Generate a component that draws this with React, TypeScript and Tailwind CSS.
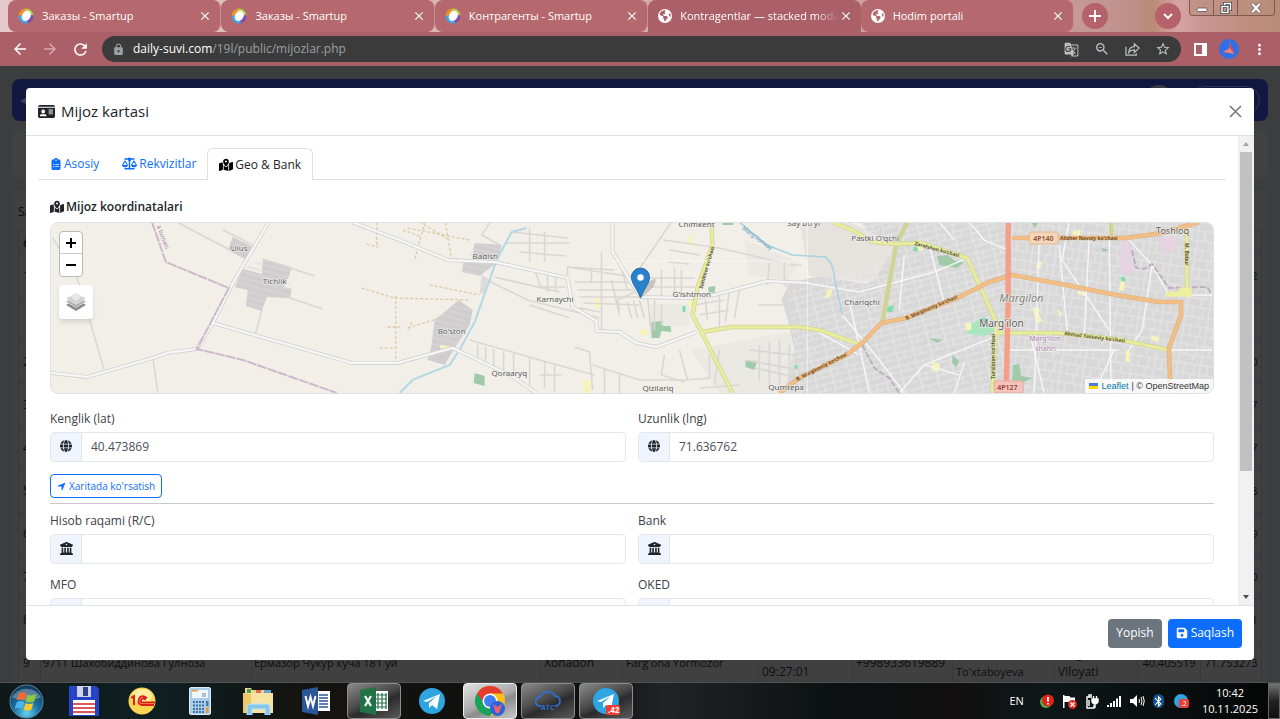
import { useState, type ReactNode } from "react";
import {
  FaBuildingColumns,
  FaClipboardList,
  FaEarthAmericas,
  FaFloppyDisk,
  FaGlobe,
  FaIdCard,
  FaLocationArrow,
  FaMapLocationDot,
  FaScaleBalanced,
} from "react-icons/fa6";
import {
  MdArrowBack,
  MdArrowForward,
  MdBluetooth,
  MdClose,
  MdGTranslate,
  MdLock,
  MdMoreVert,
  MdRefresh,
  MdStarBorder,
  MdZoomOut,
} from "react-icons/md";

const browserTabs = [
  { title: "Заказы - Smartup", icon: "smartup" },
  { title: "Заказы - Smartup", icon: "smartup" },
  { title: "Контрагенты - Smartup", icon: "smartup" },
  { title: "Kontragentlar — stacked moda", icon: "globe", active: true },
  { title: "Hodim portali", icon: "globe" },
];

const rows = [
  { n: "1", lng: "71.784562" },
  { n: "", lng: "" },
  { n: "2", lng: "71.752310" },
  { n: "3", lng: "71.790217" },
  { n: "4", lng: "71.781127" },
  { n: "5", lng: "71.769403" },
  { n: "6", lng: "71.775519" },
  { n: "7", lng: "71.760240" },
  { n: "8", lng: "71.758831" },
];

/* ---------- Browser ---------- */

function SmartupIcon() {
  return (
    <svg viewBox="0 0 16 16" className="size-4 shrink-0">
      <path d="M8 .5A7.500 7.500 0 0 0 .5 8l3 2 5-8z" fill="#f0932b" />
      <path d="M8 .5A7.500 7.500 0 0 1 15.500 8l-4 1-5-7z" fill="#b6d24a" />
      <path d="M15.500 8A7.500 7.500 0 0 1 8 15.500l1-5 5-4z" fill="#7b4fb0" />
      <path d="M8 15.500A7.500 7.500 0 0 1 .5 8l4-1 6 8z" fill="#3ba7e6" />
      <ellipse cx="8.200" cy="7.800" rx="4.200" ry="5.400" fill="#fff" transform="rotate(32 8 8)" />
    </svg>
  );
}

function BrowserTab({ title, icon, active }: { title: string; icon: string; active?: boolean }) {
  return (
    <div
      className={`flex h-8 min-w-0 flex-1 items-center rounded-t-lg pl-[10px] pr-2 ${
        active ? "bg-[#ab6067]" : "rounded-b-lg border-r border-[#c98e91] bg-[#b5686d]"
      }`}
    >
      {icon === "smartup" ? <SmartupIcon /> : <FaEarthAmericas className="size-[14px] shrink-0" />}
      <span
        className={`ml-2 min-w-0 flex-1 overflow-hidden whitespace-nowrap text-[11px] ${
          active ? "[mask-image:linear-gradient(to_right,#000_85%,transparent)]" : ""
        }`}
      >
        {title}
      </span>
      <button aria-label="Close tab">
        <MdClose size={14} />
      </button>
    </div>
  );
}

function WindowButtons() {
  return (
    <div className="flex h-4 w-[86px] self-start rounded-b border border-t-0 border-[#7d5a50] bg-[#b98f7d]/60">
      <button aria-label="Minimize" className="flex w-6 items-center justify-center border-r border-[#7d5a50]">
        <svg viewBox="0 0 12 12" className="size-3">
          <rect x="1" y="6" width="10" height="3.500" rx="1" fill="#fff" stroke="#555" strokeWidth=".8" />
        </svg>
      </button>
      <button aria-label="Restore" className="flex w-6 items-center justify-center border-r border-[#7d5a50]">
        <svg viewBox="0 0 12 12" className="size-3" fill="none">
          <path d="M4.500 3.500V1.500h6v6h-2" stroke="#444" strokeWidth="3" />
          <path d="M4.500 3.500V1.500h6v6h-2" stroke="#fff" strokeWidth="1.400" />
          <rect x="2" y="4.500" width="6" height="6" stroke="#444" strokeWidth="3" />
          <rect x="2" y="4.500" width="6" height="6" stroke="#fff" strokeWidth="1.400" />
        </svg>
      </button>
      <button aria-label="Close" className="flex flex-1 items-center justify-center">
        <svg viewBox="0 0 12 12" className="size-3" fill="none">
          <path d="M2.500 2l7 8M9.500 2l-7 8" stroke="#666" strokeWidth="3.600" />
          <path d="M2.500 2l7 8M9.500 2l-7 8" stroke="#fff" strokeWidth="2.200" />
        </svg>
      </button>
    </div>
  );
}

function Browser() {
  return (
    <header className="shrink-0 text-white">
      <div className="flex h-8 items-center bg-[linear-gradient(90deg,#e6c9cb_0,#c79b9a_83%,#c0918a_88%,#b98a76_90%,#d8a3a5_92%,#c9958f_94%,#b98a76_100%)] pl-2 pr-[5px]">
        <div className="flex min-w-0 flex-1">
          {browserTabs.map((t, i) => (
            <BrowserTab key={i} {...t} />
          ))}
        </div>
        <button aria-label="New tab" className="ml-2 flex size-[26px] items-center justify-center rounded-full bg-[#b5626a]">
          <svg viewBox="0 0 12 12" className="size-3" stroke="#fff" strokeWidth="2">
            <path d="M6 0v12M0 6h12" />
          </svg>
        </button>
        <button aria-label="Search tabs" className="ml-[47px] mr-2 flex size-[26px] items-center justify-center rounded-full bg-[#b5626a]">
          <svg viewBox="0 0 12 12" className="size-3" fill="none" stroke="#fff" strokeWidth="2">
            <path d="M2 4l4 4 4-4" />
          </svg>
        </button>
        <WindowButtons />
      </div>
      <div className="flex h-[34px] items-center gap-3 bg-[#ab6067] pl-[11px] pr-3">
        <button aria-label="Back"><MdArrowBack size={18} /></button>
        <button aria-label="Forward" className="text-[#d5a8ab]"><MdArrowForward size={18} /></button>
        <button aria-label="Reload"><MdRefresh size={19} /></button>
        <div className="flex h-[26px] flex-1 items-center rounded-full bg-[#3b3b3b] px-[10px] text-[#bdc1c6]">
          <MdLock size={13} className="mr-2 text-[#9aa0a6]" />
          <p className="flex-1 text-[12px] text-[#9aa0a6]">
            <span className="text-white">daily-suvi.com</span>/19l/public/mijozlar.php
          </p>
          <div className="flex items-center gap-[15px]">
            <MdGTranslate size={15} />
            <MdZoomOut size={16} />
            <svg viewBox="0 0 16 16" className="size-[15px]" fill="none" stroke="currentColor" strokeWidth="1.300">
              <path d="M1 5v9h11v-2M4 11c.5-4 2.500-6 6-6V2l5 4.500-5 4.500V8.500C7.500 8.500 5.500 9 4 11z" />
            </svg>
            <MdStarBorder size={16} />
          </div>
        </div>
        <svg viewBox="0 0 13 13" className="ml-px size-[13px]">
          <path d="M0 0h13v13H0z" fill="#fff" />
          <path d="M2 2h6v9H2z" fill="#ab6067" />
        </svg>
        <svg viewBox="0 0 20 20" className="size-5">
          <circle cx="10" cy="10" r="10" fill="#2f6fe8" />
          <path d="M10 3l1 6-7 4 6 1 5 1-2-6z" fill="#f5807a" />
          <path d="M10 3l1 6 4 6-2-7z" fill="#e0483e" />
        </svg>
        <button aria-label="Menu"><MdMoreVert size={17} /></button>
      </div>
    </header>
  );
}

/* ---------- Customers page under the dialog ---------- */

function CustomersPage() {
  return (
    <div className="h-full overflow-hidden px-3 pt-[13px] text-[12px] text-[#0c0d0e]">
      <div className="flex h-[42px] items-center rounded-lg bg-[#111840] px-2 text-[#3d4152]">
        <span>◀</span>
        <span className="ml-auto mr-4 size-[30px] rounded-full bg-[#3b3a3f]" />
        <span className="h-7 w-[70px] rounded-full border border-[#2c3253]" />
      </div>
      <div className="mt-2 h-[50px] rounded-lg bg-[#404143]" />
      <div className="mt-3 rounded-lg bg-[#404041] px-[6px] pt-3">
        <p className="h-[27px]">Sahifada</p>
        <table className="w-full table-fixed border-collapse">
          <colgroup>
            <col className="w-[22px]" />
            <col className="w-[211px]" />
            <col className="w-[289px]" />
            <col className="w-[82px]" />
            <col className="w-[136px]" />
            <col className="w-[94px]" />
            <col className="w-[100px]" />
            <col className="w-[102px]" />
            <col className="w-[83px]" />
            <col className="w-[63px]" />
            <col />
          </colgroup>
          <thead>
            <tr className="h-6">
              <th className="border border-[#37373f] px-1 text-left">#</th>
              <th colSpan={10} className="border border-[#37373f]" />
            </tr>
          </thead>
          <tbody>
            {rows.map((r, i) => (
              <tr key={i} className="h-[43px]">
                <td className="border border-[#37373f] px-1">{r.n}</td>
                <td colSpan={9} className="border border-[#37373f]" />
                <td className="whitespace-nowrap border border-[#37373f] text-center text-[11px]">{r.lng}</td>
              </tr>
            ))}
            <tr className="h-[43px] whitespace-nowrap leading-[18px]">
              <td className="border border-[#37373f] px-1">9</td>
              <td className="border border-[#37373f] px-[2px] text-[11px]">9711 Шахобиддинова Гулноза</td>
              <td className="border border-[#37373f] px-[2px] text-[11px]">Ермазор Чукур куча 181 уй</td>
              <td className="border border-[#37373f] px-[3px]">Xonadon</td>
              <td className="border border-[#37373f] px-[3px] text-[11px]">Farg'ona Yormozor</td>
              <td className="border border-[#37373f] px-[3px]">10.11.2025<br />09:27:01</td>
              <td className="border border-[#37373f] px-[3px]">+998933619889</td>
              <td className="border border-[#37373f] px-[3px] text-[11px]">Gulnoza<br />To'xtaboyeva</td>
              <td className="border border-[#37373f] px-[3px]">Farg'ona<br />Viloyati</td>
              <td className="border border-[#37373f] text-center text-[11px]">40.405519</td>
              <td className="border border-[#37373f] text-center text-[11px]">71.753273</td>
            </tr>
          </tbody>
        </table>
      </div>
    </div>
  );
}

/* ---------- Map ---------- */

const mainRoads = [
  "M269 222L233 283L213 323L197 349L167 353L153 358L87 377L51 373",
  "M213 323L352 363H398L453 348L510 375L537 393",
  "M352 222L400 240L448 260L495 262L568 278L573 307L597 321V331L620 332L637 343L657 347L697 332",
  "M613 222V252L641 297L693 298L715 295L768 281L810 283",
];

const villageRoads = [
  "M177 222L232 251M223 230L253 245M263 259L315 276M290 298L323 309M262 310L256 333",
  "M153 358L158 393M52 237L77 277L104 369",
  "M490 223L482 235L500 245M507 243H570M512 232L568 238M520 252L566 256M530 228V262M545 232V262",
  "M495 277L560 292M485 279L528 300L600 318M530 305L570 318M536 272L541 287H566M548 275V292M556 277V291",
  "M568 267L640 278M568 275V267L615 270M575 282H640M578 290H638M580 297H641M584 303L641 305M592 268V283M602 252V330M580 308L600 312M612 280L620 315M620 260L628 290",
  "M620 310L618 300L640 290M628 302L632 318M634 300L638 318M640 300L645 318M648 297L652 335M655 300V330M662 305V325",
  "M641 267L668 228L672 222M664 240L720 248L780 262M670 250L700 255M668 262L690 264M662 270V300M675 268V300M650 278H695M652 287H695M682 270V298",
  "M695 305L725 300M700 315L730 310M708 320L706 300M720 295V330M730 290L726 322M740 290L735 318",
  "M470 340L540 360L595 375M478 345V358M486 347V362M494 349V368M504 351V372M514 354V378M530 358V385M545 362V388M555 365V392M540 375H562",
  "M575 347L590 352L593 390M593 365L640 380H690M605 370V393M620 375V393M665 355L662 375L685 382M680 350L688 380L710 378V355M720 350L715 385M740 385L700 388",
  "M785 262V285L800 290M790 265H802M770 263L768 285M758 305H795M745 360L800 370M760 345V380M770 342V385M780 340V390M790 345V392M750 350L795 355M755 368L800 378",
];

const cityStreets = [
  "M800 282L860 292L935 272L968 258",
  "M843 315L880 360L905 393M815 330L860 355M900 393L925 365L1000 335M925 365L960 375",
  "M970 222L985 240L1009 250M940 222L955 240M1070 222L1063 260L1110 330",
  "M1130 240L1153 265L1143 330L1130 350M1110 225L1112 393M1153 265L1170 295L1213 295",
  "M1115 350L1095 393M1165 350H1213M1030 330L1045 393M1009 350H1120M965 363L955 393",
  "M905 255L900 310M930 245L945 303M850 300L870 393M1040 242L1035 393M1060 245L1068 330M1090 240L1085 338",
];

const tracks = [
  "M377 222V247M367 244L378 247M403 230L420 236M362 288L395 298L470 300M396 296V360M380 348H396M388 327H400M412 322L408 332",
  "M408 228L470 240M420 222L450 240M446 223L452 260M425 222L415 260M430 285L480 295M408 328L440 318",
];

type Label = [string, number, number, number?];
const labels: Label[] = [
  ["Ulus", 231, 251],
  ["Tichlik", 263, 284],
  ["Badish", 473, 259],
  ["Karnaychi", 537, 302],
  ["Bo'ston", 438, 334],
  ["Qoraaryq", 492, 376],
  ["Qizilariq", 643, 391],
  ["Qumtepa", 769, 390],
  ["Chimkent", 679, 227],
  ["G'ishtmon", 673, 297],
  ["Say bo'yi", 788, 226],
  ["Pastki O'qchi", 852, 241],
  ["Chariqchi", 845, 305],
  ["Toshloq", 1157, 234, 9],
  ["Marg'ilon", 980, 327, 10],
];

function LeafletMap() {
  return (
    <div className="relative h-[172px] overflow-hidden rounded-lg border border-[#dee2e6] bg-[#f2efe9]">
      <svg viewBox="51 222 1163 172" preserveAspectRatio="xMidYMid slice" className="size-full" fill="none" fontFamily='"Noto Sans", sans-serif'>
        <defs>
          <pattern id="blocksA" width="17" height="13" patternUnits="userSpaceOnUse" patternTransform="rotate(-14)">
            <path d="M0 1H17M3 0V13M10 1V7M3 7H17" stroke="#e9e8e8" strokeWidth="1" />
          </pattern>
          <pattern id="blocksB" width="23" height="19" patternUnits="userSpaceOnUse" patternTransform="rotate(9)">
            <path d="M0 2H23M2 0V19M9 2V12M2 12H23M16 12V19M19 2V12" stroke="#e8e7e7" strokeWidth="1" />
          </pattern>
          <pattern id="houses" width="7" height="6" patternUnits="userSpaceOnUse" patternTransform="rotate(14)">
            <path d="M0 1H7" stroke="#dcdadb" />
          </pattern>
        </defs>

        {/* built-up areas */}
        <g fill="#cfcdce">
          <path d="M233 237L253 247L247 260L228 250z" />
          <path d="M263 259L292 267L289 277L284 287L292 289L290 298L267 297L262 311L246 306L248 290L235 287L243 269L262 274z" />
          <path d="M475 243L502 245L498 262L480 276L462 272L464 262L472 261z" />
          <path d="M459 300L473 310L470 325L455 348L445 365L428 360L432 345L435 320L445 312z" />
          <path d="M482 275L488 278L486 293L480 294z" opacity=".6" />
        </g>
        <path d="M263 259L292 267L289 277L292 289L290 298L267 297L262 311L246 306L248 290L235 287L243 269zM475 243L502 245L498 262L480 276L462 272zM459 300L473 310L455 348L428 360L435 320z" fill="url(#houses)" />
        <path d="M650 304H690V326H650zM692 350L790 332L800 393H720zM745 240L800 262L790 280L750 275z" fill="#e6e4e1" opacity=".6" />
        <path d="M862 222H1214V394H785L795 350L788 318L782 300L790 283L820 276L868 284L884 262z" fill="#d9d8d8" />
        <path d="M810 276L874 282L897 244L850 222H800z" fill="#e6e3df" />
        <path d="M1012 222H1214V394H1012z" fill="url(#blocksB)" />
        <path d="M862 222H1012V394H785L795 350L788 290L820 280L884 262z" fill="url(#blocksA)" />

        {/* parks and yards */}
        <g fill="#9fcbaa">
          <path d="M652 322L663 321V326H671L672 332L662 331L660 338H652zM475 373L485 376V386L474 383zM746 360L758 361L755 370L746 367zM709 287L716 286L715 293L709 292zM723 222H734V225H723z" />
          <path d="M938 256L948 255L956 261L965 262L958 268L940 265zM930 338L943 340L938 343zM953 355L960 361L957 367L953 363zM1014 365L1020 364L1022 376L1034 378L1022 383L1013 380zM1032 223H1039L1036 228zM1102 248L1110 250L1104 252z" />
        </g>
        <path d="M970 325L985 316L996 331L985 336L968 334z" fill="#a9e6bf" />
        <path d="M983 318h5v5h-5zM1122 277h4v8h-4zM683 306h3v6h-3zM795 365h3v5h-3zM914 247h5v4h-5zM888 307l7-2-2 7h-5z" fill="#7fdcae" />
        <path d="M689 235l5 1-1 9h-5zM688 301l6-1 2 5-7 1zM595 299l7-1-1 10h-6zM641 329l8 1-1 6-8-2zM584 380h8v13h-9zM440 345l10 1v3h-9zM828 290l6-2-3 9-6 2zM966 323h6v7h-6zM1033 307l7 1v7l3 6-4 2-4-8zM1074 231l8-1-2 6-7-1zM1039 261l4 1-2 7-4-2zM1078 291l9 2-1 3-8-2zM1122 281l4 1-1 9-5-1zM1152 335l8 2-1 5-7-2zM1127 350h4v12h-4zM933 362l8 2-2 8-7-2zM1006 311l4 2-2 2zM1057 309l6 4-2 3zM918 247l6-2-1 6h-4z" fill="#f6f4be" />
        <path d="M1122 242h8l4 30-13 3zM1160 238l17-2 2 12-14 7z" fill="#e6d4e2" />

        {/* small streets */}
        {villageRoads.map((d) => (
          <path key={d} d={d} stroke="#dad6d5" strokeWidth="1.600" />
        ))}
        {tracks.map((d) => (
          <path key={d} d={d} stroke="#dcc9a4" strokeWidth="1.300" strokeDasharray="3 2" />
        ))}
        {cityStreets.map((d) => (
          <path key={d} d={d} stroke="#f7f7f7" strokeWidth="1.400" />
        ))}

        {/* water */}
        <path d="M527 228L512 232L497 260L475 322L461 348L450 365L413 380L400 393M51 373L87 378" stroke="#b3d8e3" strokeWidth="2" />
        <path d="M740 222L767 245L793 255L826 257Q834 262 835 278L843 315" stroke="#a9d3e0" strokeWidth="1.600" />

        {mainRoads.map((d) => (
          <path key={d} d={d} stroke="#d5d4d5" strokeWidth="4" strokeLinejoin="round" />
        ))}
        {mainRoads.map((d) => (
          <path key={d} d={d} stroke="#f7f7f6" strokeWidth="2.200" strokeLinejoin="round" />
        ))}
        <path d="M152 222L166 262L229 288L197 349L243 360L337 393" stroke="#cdb9cb" strokeWidth="2" strokeDasharray="10 1" />
        <path d="M1133 250L1137 268L1145 269L1153 264L1170 288L1208 287L1213 294M863 345L875 368L890 378L900 393" stroke="#c1a9c4" strokeWidth="1.800" strokeDasharray="6 2" />

        {/* secondary roads */}
        <g strokeLinejoin="round">
          <g stroke="#d0d394" strokeWidth="4.400">
            <path d="M712 222L713 245L698 288L693 315L702 332L733 393" />
            <path d="M702 332L733 327H800L820 330L862 345M833 222L853 230L873 242L897 244L923 243L968 258L997 322L993 393M997 333H1060L1117 339L1170 350M1188 225V290M897 244L883 323M897 244L908 222M1112 222V239" />
          </g>
          <g stroke="#e8ec9d" strokeWidth="3">
            <path d="M712 222L713 245L698 288L693 315L702 332L733 393" />
            <path d="M702 332L733 327H800L820 330L862 345M833 222L853 230L873 242L897 244L923 243L968 258L997 322L993 393M997 333H1060L1117 339L1170 350M1188 225V290" />
          </g>
          <path d="M1167 294H1190M1180 290H1190V297" stroke="#eeee9f" strokeWidth="5" />
          <path d="M780 393L800 378L847 355L863 343L882 323L907 318L960 297L990 282L1013 275L1067 285L1117 295L1160 302H1182V315L1170 348L1171 382M1013 238H1127L1163 233L1200 222" stroke="#d9b084" strokeWidth="4.600" />
          <path d="M780 393L800 378L847 355L863 343L882 323L907 318L960 297L990 282L1013 275L1067 285L1117 295L1160 302H1182V315L1170 348L1171 382M1013 238H1127L1163 233L1200 222" stroke="#f3be83" strokeWidth="3.400" />
          <path d="M1009 222V300L1007 393" stroke="#f59e88" strokeWidth="5.400" />
        </g>

        {/* road numbers */}
        <rect x="1030" y="232" width="29" height="12" rx="2" fill="#f6d6b8" stroke="#e0b994" />
        <rect x="995" y="381" width="29" height="12" rx="2" fill="#f3c3bc" stroke="#e6aaa1" />
        <g fill="#8c4a35" fontSize="7" fontWeight="600">
          <text x="1034" y="241">4P140</text>
          <text x="998" y="390" fill="#a03c38">4P127</text>
        </g>
        <g fill="#5c5737" fontSize="5" fontWeight="700">
          <text transform="translate(703 289) rotate(-74)">Sohibkor ko'chasi</text>
          <text transform="translate(915 245) rotate(15)">Zarafshon ko'chasi</text>
          <text transform="translate(996 379) rotate(-90)">Turkiston ko'chasi</text>
          <text transform="translate(1065 335) rotate(7)">Ahmad Yassaviy ko'chasi</text>
          <text transform="translate(1186 243) rotate(90)">M. Bobur</text>
          <g fill="#6b4a28">
            <text x="1061" y="240">Alisher Navoiy ko'chasi</text>
            <text transform="translate(907 320) rotate(-23)">B. Marginoniy ko'chasi</text>
            <text transform="translate(798 381) rotate(-27)">B. Marginoniy ko'chasi</text>
          </g>
        </g>
        <text transform="translate(742 229) rotate(36)" fontSize="6" fill="#5e93bd">Marg'ilonsoy</text>
        <text transform="translate(157 226) rotate(70)" fontSize="6" fill="#a283a2">a tumani</text>

        <g fill="#5a5a5a" stroke="#f3f1ee" strokeWidth="1.200" paintOrder="stroke">
          {labels.map(([text, x, y, size]) => (
            <text key={text} x={x} y={y} fontSize={size ?? 8}>{text}</text>
          ))}
          <text x="1000" y="302" fontSize="11" fontStyle="italic" fill="#808080">Margilon</text>
          <g fill="#a77fb0" fontSize="7">
            <text x="1030" y="341">Marg'ilon</text>
            <text x="1036" y="351">shahri</text>
          </g>
        </g>

        <path d="M613 261H808V222M808 261V393" stroke="#fff" strokeWidth=".8" opacity=".7" />

        {/* marker */}
        <path d="M641 298l5-12q6-8 10-7 2 7-15 19z" fill="#000" opacity=".18" />
        <path d="M641 298C638 289 632 284 632 277a9 9 0 0 1 18 0C650 284 644 289 641 298z" fill="#2a81cb" stroke="#2369a6" />
        <circle cx="641" cy="277.500" r="3.200" fill="#fff" />
      </svg>

      <div className="absolute left-2 top-2 flex flex-col items-start gap-2">
        <div className="flex flex-col overflow-hidden rounded-sm border border-[#b9b8b5] bg-white text-black">
          <button aria-label="Zoom in" className="flex size-[22px] items-center justify-center border-b border-[#ccc]">
            <svg viewBox="0 0 10 10" className="size-[10px]" stroke="currentColor" strokeWidth="2"><path d="M5 0v10M0 5h10" /></svg>
          </button>
          <button aria-label="Zoom out" className="flex size-[22px] items-center justify-center">
            <svg viewBox="0 0 10 10" className="size-[10px]" stroke="currentColor" strokeWidth="2"><path d="M0 5h10" /></svg>
          </button>
        </div>
        <button aria-label="Layers" className="flex size-[34px] items-center justify-center rounded bg-white shadow-md">
          <svg viewBox="0 0 20 20" className="size-5">
            <path d="M0 13l10 6 10-6-3-2-7 4-7-4z" fill="#8d8d8d" />
            <path d="M0 9.500l10 6 10-6-3-2-7 4-7-4z" fill="#acacac" stroke="#fff" strokeWidth=".5" />
            <path d="M0 6.500L10 1l10 5.500-10 6z" fill="#d0d0d0" stroke="#fff" strokeWidth=".5" />
            <path d="M4 4.500L10 1l6 3.500-6 5z" fill="#e6e6e6" />
          </svg>
        </button>
      </div>

      <p className="absolute bottom-0 right-0 flex items-center gap-[3px] bg-white/80 px-1 font-['Liberation_Sans',sans-serif] text-[9px] leading-[14px] text-[#333]">
        <svg viewBox="0 0 9 6" className="h-[6px] w-[9px]">
          <path d="M0 0h9v3H0z" fill="#4c7be1" />
          <path d="M0 3h9v3H0z" fill="#ffd500" />
        </svg>
        <a href="#leaflet" className="text-[#0078a8]">Leaflet</a>
        <span>| © OpenStreetMap</span>
      </p>
    </div>
  );
}

/* ---------- Dialog ---------- */

function Field({ id, label, icon, value = "" }: { id: string; label: string; icon: ReactNode; value?: string }) {
  const [text, setText] = useState(value);
  return (
    <div>
      <label htmlFor={id} className="mb-1 block leading-[18px]">{label}</label>
      <div className="flex h-[30px] overflow-hidden rounded border border-[#e3e6ea]">
        <span className="flex w-[31px] items-center justify-center border-r border-[#e3e6ea] bg-[#f0f4ff] pb-[2px] text-[#212529]">
          {icon}
        </span>
        <input id={id} value={text} onChange={(e) => setText(e.target.value)} className="min-w-0 flex-1 px-[9px] text-[#495057] outline-none" />
      </div>
    </div>
  );
}

function CustomerDialog() {
  return (
    <section role="dialog" aria-label="Mijoz kartasi" className="flex min-h-0 flex-1 flex-col overflow-hidden rounded bg-white text-[12px] text-[#3d4247]">
      <div className="flex h-12 shrink-0 items-center gap-[6px] border-b border-[#dee2e6] px-3 text-[#212529]">
        <FaIdCard size={17} />
        <h5 className="flex-1 text-[15px]">Mijoz kartasi</h5>
        <button aria-label="Close" className="text-[#777]">
          <svg viewBox="0 0 13 13" className="size-[13px]" stroke="currentColor" strokeWidth="1.600"><path d="M1 1l11 11M12 1L1 12" /></svg>
        </button>
      </div>

      <div className="flex min-h-0 flex-1">
        <div className="min-w-0 flex-1 overflow-hidden px-3 pt-3">
          <nav className="flex h-8 border-b border-[#dee2e6]">
            <a href="#asosiy" className="flex items-center gap-[2px] px-3 text-[#0d6efd]">
              <FaClipboardList size={12} /> Asosiy
            </a>
            <a href="#rekvizitlar" className="flex items-center gap-[2px] px-[11px] text-[#0d6efd]">
              <FaScaleBalanced size={15} /> Rekvizitlar
            </a>
            <a href="#geo" className="-mb-px flex items-center gap-[2px] rounded-t-md border border-b-0 border-[#dee2e6] bg-white px-[11px] text-[#212529]">
              <FaMapLocationDot size={14} className="text-black" /> Geo & Bank
            </a>
          </nav>

          <div className="px-3 pt-[18px]">
            <h6 className="mb-[6px] flex items-center gap-[2px] font-semibold leading-[18px] text-[#212529]">
              <FaMapLocationDot size={14} /> Mijoz koordinatalari
            </h6>
            <LeafletMap />

            <div className="mt-4 grid grid-cols-2 gap-3">
              <Field id="lat" label="Kenglik (lat)" icon={<FaGlobe size={12} />} value="40.473869" />
              <Field id="lng" label="Uzunlik (lng)" icon={<FaGlobe size={12} />} value="71.636762" />
            </div>

            <button className="mt-3 flex h-6 items-center gap-[3px] rounded-sm border border-[#0d6efd] px-[6px] text-[10px] text-[#0d6efd]">
              <FaLocationArrow size={9} /> Xaritada ko'rsatish
            </button>
            <hr className="mb-2 mt-[5px] border-[#c8cacc]" />

            <div className="grid grid-cols-2 gap-3">
              <Field id="hisob" label="Hisob raqami (R/C)" icon={<FaBuildingColumns size={13} />} />
              <Field id="bank" label="Bank" icon={<FaBuildingColumns size={13} />} />
              <Field id="mfo" label="MFO" icon={<FaBuildingColumns size={13} />} />
              <Field id="oked" label="OKED" icon={<FaBuildingColumns size={13} />} />
            </div>
          </div>
        </div>

        {/* scroll bar */}
        <div className="flex w-4 flex-col items-center bg-[#f1f1f1]">
          <svg viewBox="0 0 16 16" className="size-4 shrink-0"><path d="M5 10l3-4 3 4z" fill="#a3a3a3" /></svg>
          <div className="min-h-0 w-full flex-1">
            <div className="mx-auto h-[73%] w-3 bg-[#c1c1c1]" />
          </div>
          <svg viewBox="0 0 16 16" className="size-4 shrink-0"><path d="M5 6l3 4 3-4z" fill="#505050" /></svg>
        </div>
      </div>

      <div className="flex h-[55px] shrink-0 items-center justify-end gap-[6px] border-t border-[#dee2e6] px-3 text-white">
        <button className="h-[29px] rounded bg-[#6c757d] px-2">Yopish</button>
        <button className="flex h-[29px] items-center gap-[3px] rounded bg-[#0d6efd] px-2">
          <FaFloppyDisk size={12} /> Saqlash
        </button>
      </div>
    </section>
  );
}

/* ---------- Taskbar ---------- */

function TaskItem({ label, tone, children }: { label: string; tone?: "open" | "active"; children: ReactNode }) {
  const tones = {
    open: "border border-[#8d8d8d] bg-[linear-gradient(155deg,#8a8a8a_0%,#4a4a4a_45%,#2b2b2b_60%,#5a5a5a_100%)]",
    active: "border border-[#eee] bg-[linear-gradient(155deg,#e2e2e2_0%,#a9a9a9_50%,#8b8b8b_60%,#c9c9c9_100%)]",
  };
  return (
    <button aria-label={label} className={`flex h-9 w-[54px] items-center justify-center rounded-sm ${tone ? tones[tone] : ""}`}>
      {children}
    </button>
  );
}

function TelegramIcon({ badge }: { badge?: string }) {
  return (
    <svg viewBox="0 0 30 30" className="size-[30px]">
      <circle cx="15" cy="15" r="13" fill="#2ca5e0" />
      <path d="M6 15l17-7-3 15-5-4-3 3v-5l8-7-10 6z" fill="#fff" />
      {badge && (
        <>
          <rect x="15" y="19" width="14" height="10" rx="2" fill="#f23c34" />
          <text x="17" y="27" fontSize="8" fontWeight="700" fill="#fff">{badge}</text>
        </>
      )}
    </svg>
  );
}

function Taskbar() {
  return (
    <footer className="flex h-[37px] shrink-0 items-center border-t border-[#4e5253] bg-[linear-gradient(90deg,#10181a_0%,#0d1f22_12%,#14130f_24%,#0e0f0f_45%,#202326_52%,#0c1112_65%,#121010_75%,#0e1718_82%,#050606_100%)] text-white">
      <div className="-ml-px flex gap-1">
        <TaskItem label="Start">
          <svg viewBox="0 0 36 36" className="size-[35px]">
            <defs>
              <radialGradient id="orb" cx=".5" cy=".85" r=".8">
                <stop offset="0" stopColor="#5fd3f2" />
                <stop offset=".5" stopColor="#1c6ea0" />
                <stop offset="1" stopColor="#123c5e" />
              </radialGradient>
            </defs>
            <circle cx="18" cy="18" r="17" fill="url(#orb)" stroke="#5b8aa5" />
            <path d="M3 14a16 14 0 0 1 30 0q-15 6-30 0z" fill="#fff" opacity=".28" />
            <path d="M10 10q4-3 8 0l-2 7q-4-2-8 0z" fill="#ef6a35" />
            <path d="M19 11q4 2 9-1l-2 8q-5 2-9 0z" fill="#8fc83e" />
            <path d="M8 18.500q4-2 8 0l-2 7q-4-2-8 0z" fill="#4cb4ee" />
            <path d="M17 19.500q4 2 8 0l-2 7q-4 2-8 0z" fill="#fcc832" />
          </svg>
        </TaskItem>
        <TaskItem label="Total Commander">
          <svg viewBox="0 0 30 30" className="size-[30px]">
            <path d="M0 0h27l3 3v27H0z" fill="#2743c9" />
            <path d="M8 0h14v11H8z" fill="#cfd5e2" />
            <path d="M14 1h5v9h-5z" fill="#31418c" />
            <path d="M4 14h22v15H4z" fill="#fff" />
            <path d="M4 18h22M4 22h22M4 26h22" stroke="#d4202c" strokeWidth="1.500" />
          </svg>
        </TaskItem>
        <TaskItem label="1C">
          <svg viewBox="0 0 28 28" className="size-7">
            <circle cx="14" cy="14" r="13.500" fill="#f9d551" />
            <ellipse cx="14" cy="9" rx="10" ry="7" fill="#fff6c4" opacity=".7" />
            <path d="M3 11l3-2v9M19 11q-6-4-8 1t3 6h12M18 12.500q-4-2-5 .5t2 2.500h12" fill="none" stroke="#dc1f1f" strokeWidth="2" />
          </svg>
        </TaskItem>
        <TaskItem label="Calculator">
          <svg viewBox="0 0 22 28" className="h-7 w-[22px]">
            <rect x=".5" y=".5" width="21" height="27" rx="1.500" fill="#a9cdea" stroke="#dceefa" />
            <path d="M3 3h16v8H3z" fill="#eef7fd" />
            <path d="M3 3h6v1.500H3z" fill="#f2a03c" />
            <path d="M13 7h4M13 9h4" stroke="#5d88ad" />
            <path d="M4 15h11M4 18.500h11M4 22h11M4 25h11" stroke="#44749b" strokeWidth="2" strokeDasharray="2 1" />
            <path d="M17 20h2.500v6H17z" fill="#f19a39" />
            <path d="M17 14h2.500v5H17z" fill="#447bab" />
          </svg>
        </TaskItem>
        <TaskItem label="Explorer">
          <svg viewBox="0 0 32 28" className="h-7 w-8">
            <path d="M3 1h6l1 2h16v6H3z" fill="#f1d488" />
            <path d="M5 2h4v4H5z" fill="#3ea45b" />
            <path d="M14 3h5v3h-5z" fill="#e26a54" />
            <path d="M22 3h7v4h-7z" fill="#67a5d8" />
            <path d="M1 6h30v20H1z" fill="#f7e3a0" />
            <path d="M1 6l8 1v19H1z" fill="#edc968" />
            <path d="M5 28v-8q0-3 3-3h17q3 0 3 3v8h-5v-6H10v6z" fill="#86c8ec" stroke="#bfe5f8" />
          </svg>
        </TaskItem>
        <TaskItem label="Word">
          <svg viewBox="0 0 28 28" className="size-7">
            <path d="M14 4h14v20H14z" fill="#fff" />
            <path d="M17 8h9M17 11h9M17 14h9M17 17h9M17 20h9" stroke="#2b579a" strokeWidth="1.300" />
            <path d="M0 3l16-3v28L0 25z" fill="#2b579a" />
            <path d="M3.500 9l2.500 10 2.500-9 2.500 9 2.500-10" fill="none" stroke="#fff" strokeWidth="2" />
          </svg>
        </TaskItem>
        <TaskItem label="Excel" tone="open">
          <svg viewBox="0 0 28 28" className="size-7">
            <path d="M14 4h14v20H14z" fill="#fff" />
            <path d="M18 6v16M22 6v16M26 6v16M16 8h11M16 12h11M16 16h11M16 20h11" stroke="#217346" strokeWidth="1.200" />
            <path d="M0 3l16-3v28L0 25z" fill="#217346" />
            <path d="M5 9l6 10M11 9L5 19" stroke="#fff" strokeWidth="2.200" />
          </svg>
        </TaskItem>
        <TaskItem label="Telegram">
          <TelegramIcon />
        </TaskItem>
        <TaskItem label="Chrome" tone="active">
          <svg viewBox="0 0 30 30" className="size-[30px]">
            <circle cx="15" cy="15" r="15" fill="#fbc116" />
            <path d="M15 15L2 7.500A15 15 0 0 0 15 30l7-11z" fill="#1aa260" />
            <path d="M2 7.500A15 15 0 0 1 28 7.500H15L9 17z" fill="#e33b2e" />
            <circle cx="15" cy="15" r="7.500" fill="#fff" />
            <circle cx="15" cy="15" r="6" fill="#3f7ff0" />
            <circle cx="22.500" cy="22.500" r="7.500" fill="#2f63da" />
            <path d="M18 18l4.500 3 4.500-3-2.500 8-2 1.500-2-1.500z" fill="#f0606c" />
          </svg>
        </TaskItem>
        <TaskItem label="ATC" tone="open">
          <svg viewBox="0 0 26 24" className="h-6 w-[26px]" fill="none" stroke="#2f6fd0" strokeWidth="1.800">
            <path d="M6 17H5a4 4 0 0 1 0-9 8 7 0 0 1 15-1 5 5 0 0 1 0 10" />
            <text x="6" y="21" fontSize="7" fontWeight="700" fill="#2f6fd0" stroke="none">ATC</text>
          </svg>
        </TaskItem>
        <TaskItem label="Telegram chats" tone="open">
          <TelegramIcon badge=".42" />
        </TaskItem>
      </div>

      <div className="ml-auto flex h-full items-center">
        <span className="mr-4 text-[11px]">EN</span>
        <div className="flex items-center gap-2">
          <svg viewBox="0 0 14 14" className="size-[14px]">
            <circle cx="6" cy="8" r="6" fill="#4caf50" />
            <circle cx="8" cy="6.500" r="6" fill="#e3231b" />
            <path d="M8 3v4.500M8 9v1.500" stroke="#fff" strokeWidth="1.800" />
          </svg>
          <svg viewBox="0 0 15 15" className="size-[15px]">
            <path d="M1 1h1.500v13H1zM2.500 2h5l1 1.500H13V9H8L7 8H2.500z" fill="#fff" />
            <circle cx="10.500" cy="10.500" r="4.500" fill="#dc2a22" />
            <path d="M8.500 8.500l4 4M12.500 8.500l-4 4" stroke="#fff" strokeWidth="1.400" />
          </svg>
          <svg viewBox="0 0 14 15" className="h-[15px] w-[14px]" fill="none" stroke="#fff" strokeWidth="1.400">
            <path d="M7 3H2v11h7v-3M4 3V1h3M4 6v6" />
            <path d="M7 5h6v3q-3 4-6 0zM8.500 5V2M11.500 5V2M10 10v4" fill="#fff" />
          </svg>
          <svg viewBox="0 0 15 12" className="h-3 w-[15px]" fill="#fff">
            <path d="M0 10h2v2H0zM3 8h2v4H3zM6 6h2v6H6zM9 3.500h2V12H9zM12 1h2v11h-2z" />
          </svg>
          <svg viewBox="0 0 15 14" className="h-[14px] w-[15px]" fill="none" stroke="#fff">
            <path d="M0 5h3l4-4v12L3 9H0z" fill="#fff" stroke="none" />
            <path d="M9 5q1 2 0 4M11 3q2 4 0 8M13 2q2.500 5 0 10" />
          </svg>
          <span className="flex h-[14px] w-[11px] items-center justify-center rounded-full bg-[#14508f]">
            <MdBluetooth size={13} className="shrink-0" />
          </span>
          <svg viewBox="0 0 16 15" className="ml-[2px] h-[15px] w-4">
            <circle cx="7" cy="7" r="7" fill="#2ca5e0" />
            <rect x="5" y="5" width="10" height="9" rx="2" fill="#ef3a34" />
            <text x="7" y="12" fontSize="7" fill="#fff">.2</text>
          </svg>
        </div>
        <p className="ml-3 mr-[10px] text-center text-[11px] leading-4">
          10:42<br />10.11.2025
        </p>
        <button aria-label="Show desktop" className="h-full w-3 border border-[#666] bg-gradient-to-b from-[#777] via-[#222] to-[#111]" />
      </div>
    </footer>
  );
}

export default function App() {
  return (
    <div className="flex h-screen flex-col overflow-hidden bg-[#3c3d3f] font-['Open_Sans','Noto_Sans',sans-serif]">
      <Browser />
      <main className="relative min-h-0 flex-1">
        <CustomersPage />
        <div className="absolute inset-0 flex px-[26px] py-[22px]">
          <CustomerDialog />
        </div>
      </main>
      <Taskbar />
    </div>
  );
}
